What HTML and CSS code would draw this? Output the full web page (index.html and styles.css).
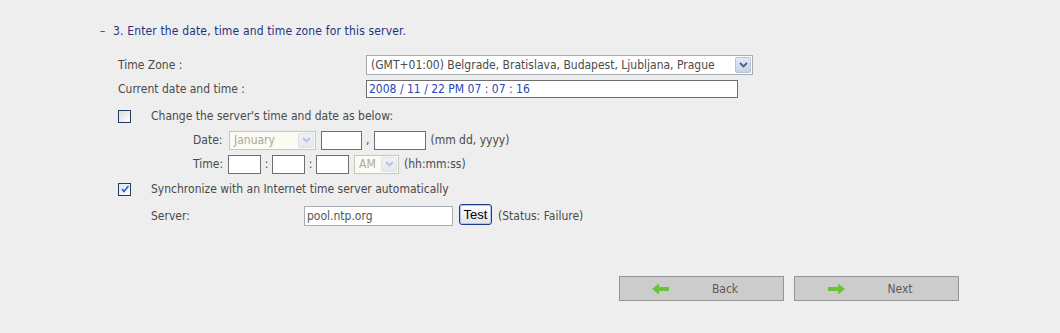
FILE: index.html
```html
<!DOCTYPE html>
<html>
<head>
<meta charset="utf-8">
<link rel="stylesheet" href="styles.css">
</head>
<body>
<div class="page">
  <div class="heading"><span class="dash">–</span><span class="htext">3. Enter the date, time and time zone for this server.</span></div>
  <div class="form">
    <div class="row r-tz">
      <span class="label">Time Zone :</span>
      <div class="select tz"><span class="sel-text">(GMT+01:00) Belgrade, Bratislava, Budapest, Ljubljana, Prague</span><span class="sel-btn"><svg width="9" height="6" viewBox="0 0 9 6"><path d="M1 1 L4.5 4.5 L8 1" fill="none" stroke="#4d6185" stroke-width="1.8"/></svg></span></div>
    </div>
    <div class="row r-cur">
      <span class="label">Current date and time :</span>
      <div class="input cur">2008 / 11 / 22 PM 07 : 07 : 16</div>
    </div>
    <div class="row r-chk1">
      <span class="cbox"></span>
      <span class="ctext">Change the server's time and date as below:</span>
    </div>
    <div class="row r-date">
      <span class="sublabel">Date:</span>
      <div class="select dis month"><span class="sel-text">January</span><span class="sel-btn"><svg width="9" height="6" viewBox="0 0 9 6"><path d="M1 1 L4.5 4.5 L8 1" fill="none" stroke="#b8c2d2" stroke-width="1.8"/></svg></span></div>
      <div class="input dd"></div>
      <span class="comma">,</span>
      <div class="input yyyy"></div>
      <span class="hint">(mm dd, yyyy)</span>
    </div>
    <div class="row r-time">
      <span class="sublabel">Time:</span>
      <div class="input hh"></div>
      <span class="sep">:</span>
      <div class="input hh"></div>
      <span class="sep">:</span>
      <div class="input hh"></div>
      <div class="select dis ampm"><span class="sel-text">AM</span><span class="sel-btn"><svg width="9" height="6" viewBox="0 0 9 6"><path d="M1 1 L4.5 4.5 L8 1" fill="none" stroke="#b8c2d2" stroke-width="1.8"/></svg></span></div>
      <span class="hint">(hh:mm:ss)</span>
    </div>
    <div class="row r-sync">
      <span class="cbox checked"><svg width="10" height="10" viewBox="0 0 10 10"><path d="M2 5 L4 7.5 L8.5 2" fill="none" stroke="#2f5fc0" stroke-width="1.6"/></svg></span>
      <span class="ctext">Synchronize with an Internet time server automatically</span>
    </div>
    <div class="row r-server">
      <span class="srvlabel">Server:</span>
      <div class="input server">pool.ntp.org</div>
      <button class="test">Test</button>
      <span class="status">(Status: Failure)</span>
    </div>
  </div>
  <div class="nav">
    <div class="navbtn"><svg class="arrow" width="18" height="12" viewBox="0 0 18 12"><path d="M0 6 L7 0.5 L7 4 L17 4 L17 8 L7 8 L7 11.5 Z" fill="#6cc23a"/></svg><span class="navtext">Back</span></div>
    <div class="navbtn"><svg class="arrow" width="18" height="12" viewBox="0 0 18 12"><path d="M18 6 L11 0.5 L11 4 L1 4 L1 8 L11 8 L11 11.5 Z" fill="#6cc23a"/></svg><span class="navtext">Next</span></div>
  </div>
</div>
</body>
</html>
```
FILE: styles.css
```css
html, body {
  margin: 0;
  padding: 0;
  background: #eeeeee;
}
body {
  font-family: "DejaVu Sans Condensed", "DejaVu Sans", sans-serif;
  font-size: 12px;
  color: #4a4a4a;
  width: 1060px;
  height: 333px;
  overflow: hidden;
}
.page {
  padding: 22px 0 0 100px;
  display: flex;
  flex-direction: column;
}
.heading {
  height: 18px;
  display: flex;
  align-items: center;
}
.dash {
  color: #cc1010;
  width: 13px;
}
.htext {
  color: #25337f;
  letter-spacing: 0.15px;
}
.form {
  margin-top: 15px;
  margin-left: 18px;
  display: flex;
  flex-direction: column;
}
.row {
  display: flex;
  align-items: center;
}
.label {
  width: 248px;
}
.r-tz { height: 20px; }
.r-cur { height: 18px; margin-top: 5px; }
.r-chk1 { height: 20px; margin-top: 8px; }
.r-date { height: 20px; margin-top: 4px; }
.r-time { height: 20px; margin-top: 4px; }
.r-sync { height: 20px; margin-top: 5px; }
.r-server { height: 22px; margin-top: 6px; }

.select {
  box-sizing: border-box;
  height: 20px;
  border: 1px solid #a5acb2;
  background: #ffffff;
  display: flex;
  align-items: stretch;
}
.sel-text {
  flex: 1;
  padding-left: 4px;
  display: flex;
  align-items: center;
  white-space: nowrap;
  overflow: hidden;
}
.sel-btn {
  width: 16px;
  margin: 1px;
  box-sizing: border-box;
  border: 1px solid #b6c3d8;
  border-radius: 2px;
  background: linear-gradient(#e3e9f3, #c7d3e5);
  display: flex;
  align-items: center;
  justify-content: center;
}
.tz {
  width: 387px;
  color: #4a4a4a;
}
.input {
  box-sizing: border-box;
  height: 18px;
  border: 1px solid #6e6e6e;
  background: #ffffff;
}
.cur {
  width: 372px;
  color: #2746b8;
  padding-left: 2px;
  line-height: 16px;
}
.cbox {
  box-sizing: border-box;
  width: 13px;
  height: 13px;
  border: 1px solid #1e3c64;
  background: linear-gradient(135deg, #dcdcd6, #ffffff);
  display: flex;
  align-items: center;
  justify-content: center;
}
.cbox.checked {
  background: linear-gradient(135deg, #dde4ee, #ffffff);
}
.ctext {
  margin-left: 20px;
}
.sublabel {
  margin-left: 75px;
  width: 36px;
}
.dis {
  border-color: #c9c7ba;
  background: #fbfbf4;
  color: #aca899;
}
.dis .sel-btn {
  border-color: #dde2ea;
  background: linear-gradient(#f0f3f8, #e3e8f0);
}
.month {
  width: 87px;
  height: 19px;
}
.dd {
  width: 41px;
  height: 19px;
  margin-left: 5px;
}
.comma {
  margin: 0 5px 0 4px;
}
.yyyy {
  width: 52px;
  height: 19px;
}
.hint {
  margin-left: 4px;
}
.r-time .sublabel {
  width: 35px;
}
.r-time .hint {
  margin-left: 5px;
}
.hh {
  width: 33px;
  height: 19px;
}
.sep {
  width: 11px;
  text-align: center;
}
.ampm {
  width: 45px;
  height: 19px;
  margin-left: 5px;
}
.srvlabel {
  margin-left: 33px;
  width: 153px;
}
.server {
  width: 149px;
  height: 20px;
  border-color: #a5acb2;
  color: #555;
  padding-left: 2px;
  line-height: 18px;
}
.test {
  box-sizing: border-box;
  margin-left: 6px;
  height: 21px;
  width: 33px;
  padding: 0;
  margin-top: -3px;
  border: 1px solid #1c3c8a;
  border-radius: 3px;
  background: linear-gradient(#ffffff, #dfe3ee);
  box-shadow: inset 0 0 0 1px #b5c6ea;
  font-family: "Liberation Sans", Arial, sans-serif;
  font-size: 13px;
  color: #000;
}
.status {
  margin-left: 6px;
}
.nav {
  margin-top: 49px;
  margin-left: 519px;
  display: flex;
  gap: 10px;
}
.navbtn {
  box-sizing: border-box;
  width: 165px;
  height: 25px;
  border: 1px solid #959595;
  background: #cccccc;
  display: flex;
  align-items: center;
  color: #5a5a5a;
}
.arrow {
  margin-left: 32px;
  flex: none;
}
.navtext {
  flex: 1;
  text-align: center;
  padding-right: 3px;
}
```
